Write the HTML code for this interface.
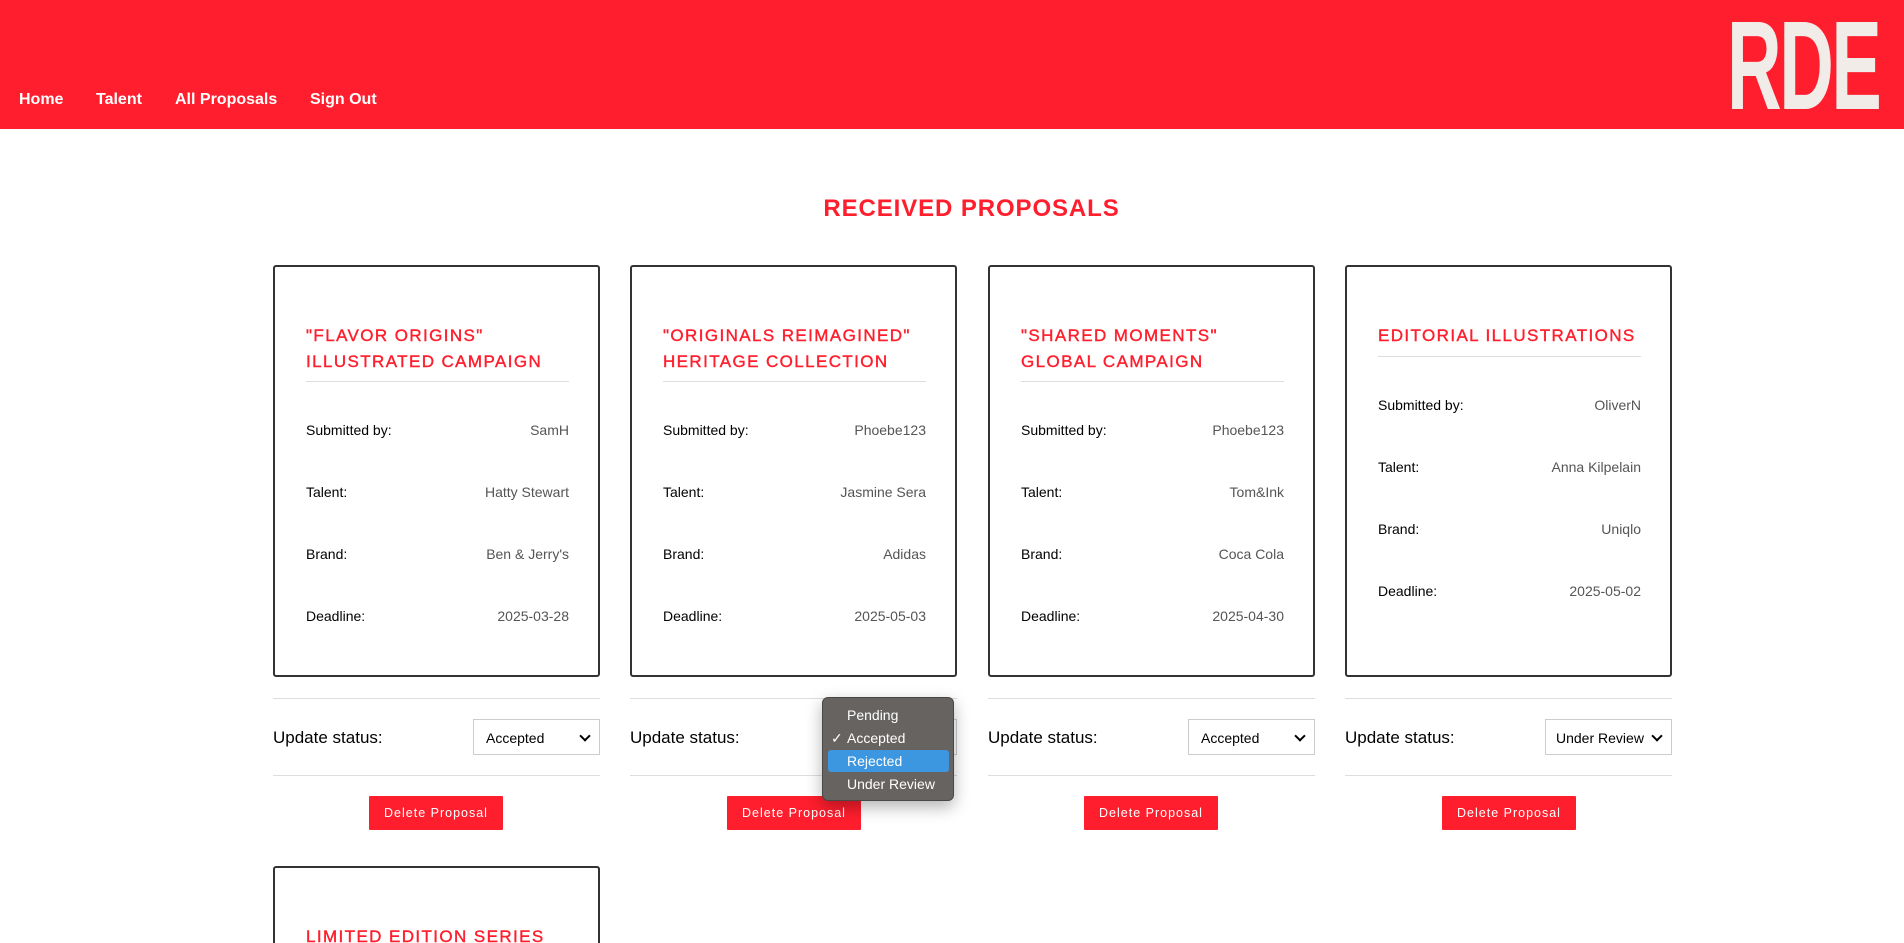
<!DOCTYPE html>
<html><head><meta charset="utf-8"><style>
*{box-sizing:border-box;margin:0;padding:0}
html{width:1904px;height:943px;overflow:hidden}
body{width:1904px;height:943px;overflow:hidden;background:#fff;font-family:"Liberation Sans",sans-serif;position:relative}
.hdr{position:absolute;left:0;top:0;width:1904px;height:129px;background:#ff1e2d}
.nav{position:absolute;top:91px;color:#fff;font-weight:bold;font-size:16px}
.logo{position:absolute;left:1727px;top:18px;width:152px;height:95px;color:#f2ece8;font-weight:bold;font-size:126px;line-height:95px;letter-spacing:-4px;transform:scaleX(0.6);transform-origin:left top;white-space:nowrap}
h1{position:absolute;top:195px;left:0;width:1943px;text-align:center;color:#ff1e2d;font-size:24px;font-weight:bold;letter-spacing:0.9px}
.card{position:absolute;top:265px;width:327px;height:412px;border:2px solid #333;border-radius:3px}
.t{position:absolute;left:31px;top:56px;width:263px;color:#ff1e2d;font-size:17px;line-height:26px;letter-spacing:1.4px;-webkit-text-stroke:0.4px #ff1e2d;white-space:nowrap}
.dv{position:absolute;left:31px;width:263px;height:1px;background:#ddd}
.r{position:absolute;left:31px;width:263px;font-size:14px;display:flex;justify-content:space-between}
.r span:last-child{color:#555}
.hl{position:absolute;height:1px;background:#ddd;width:327px}
.us{position:absolute;top:728px;font-size:17px}
.sel{position:absolute;top:719px;width:127px;height:36px;border:1px solid #ccc;font-size:14px;padding:10px 12px;background:#fff}
.sel:after{content:"";position:absolute;right:10px;top:12px;width:6px;height:6px;border-right:2px solid #000;border-bottom:2px solid #000;transform:rotate(45deg)}
.btn{position:absolute;top:796px;width:134px;height:34px;background:#ff1e2d;color:#fff;font-size:12.5px;letter-spacing:1px;text-align:center;line-height:34px;border-radius:1px}
.menu{position:absolute;left:822px;top:697px;width:132px;height:104px;background:#676361;border-radius:6px;border:1px solid #4a4846;box-shadow:0 6px 16px rgba(0,0,0,.3);color:#fff;font-size:14px}
.mi{position:absolute;left:24px}
</style></head><body>
<div class="hdr">
<div class="nav" style="left:19px">Home</div>
<div class="nav" style="left:96px">Talent</div>
<div class="nav" style="left:175px">All Proposals</div>
<div class="nav" style="left:310px">Sign Out</div>
<div class="logo">RDE</div>
</div>
<h1>RECEIVED PROPOSALS</h1>

<div class="card" style="left:273px"><div class="t">"FLAVOR ORIGINS"<br>ILLUSTRATED CAMPAIGN</div><div class="dv" style="top:114px"></div>
<div class="r" style="top:155px"><span>Submitted by:</span><span>SamH</span></div>
<div class="r" style="top:217px"><span>Talent:</span><span>Hatty Stewart</span></div>
<div class="r" style="top:279px"><span>Brand:</span><span>Ben &amp; Jerry's</span></div>
<div class="r" style="top:341px"><span>Deadline:</span><span>2025-03-28</span></div></div>

<div class="card" style="left:630px"><div class="t">"ORIGINALS REIMAGINED"<br>HERITAGE COLLECTION</div><div class="dv" style="top:114px"></div>
<div class="r" style="top:155px"><span>Submitted by:</span><span>Phoebe123</span></div>
<div class="r" style="top:217px"><span>Talent:</span><span>Jasmine Sera</span></div>
<div class="r" style="top:279px"><span>Brand:</span><span>Adidas</span></div>
<div class="r" style="top:341px"><span>Deadline:</span><span>2025-05-03</span></div></div>

<div class="card" style="left:988px"><div class="t">"SHARED MOMENTS"<br>GLOBAL CAMPAIGN</div><div class="dv" style="top:114px"></div>
<div class="r" style="top:155px"><span>Submitted by:</span><span>Phoebe123</span></div>
<div class="r" style="top:217px"><span>Talent:</span><span>Tom&amp;Ink</span></div>
<div class="r" style="top:279px"><span>Brand:</span><span>Coca Cola</span></div>
<div class="r" style="top:341px"><span>Deadline:</span><span>2025-04-30</span></div></div>

<div class="card" style="left:1345px"><div class="t">EDITORIAL ILLUSTRATIONS</div><div class="dv" style="top:89px"></div>
<div class="r" style="top:130px"><span>Submitted by:</span><span>OliverN</span></div>
<div class="r" style="top:192px"><span>Talent:</span><span>Anna Kilpelain</span></div>
<div class="r" style="top:254px"><span>Brand:</span><span>Uniqlo</span></div>
<div class="r" style="top:316px"><span>Deadline:</span><span>2025-05-02</span></div></div>

<div class="hl" style="left:273px;top:698px"></div><div class="hl" style="left:630px;top:698px"></div><div class="hl" style="left:988px;top:698px"></div><div class="hl" style="left:1345px;top:698px"></div>
<div class="hl" style="left:273px;top:775px"></div><div class="hl" style="left:630px;top:775px"></div><div class="hl" style="left:988px;top:775px"></div><div class="hl" style="left:1345px;top:775px"></div>
<div class="us" style="left:273px">Update status:</div><div class="us" style="left:630px">Update status:</div><div class="us" style="left:988px">Update status:</div><div class="us" style="left:1345px">Update status:</div>
<div class="sel" style="left:473px">Accepted</div><div class="sel" style="left:830px">Accepted</div><div class="sel" style="left:1188px">Accepted</div><div class="sel" style="left:1545px;padding-left:10px">Under Review</div>
<div class="btn" style="left:369px">Delete Proposal</div><div class="btn" style="left:727px">Delete Proposal</div><div class="btn" style="left:1084px">Delete Proposal</div><div class="btn" style="left:1442px">Delete Proposal</div>

<div class="menu">
<div class="mi" style="top:9px">Pending</div>
<div style="position:absolute;left:8px;top:32px">✓</div><div class="mi" style="top:32px">Accepted</div>
<div style="position:absolute;left:5px;top:52px;width:121px;height:22px;background:#3d97e0;border-radius:3px"></div>
<div class="mi" style="top:55px">Rejected</div>
<div class="mi" style="top:78px">Under Review</div>
</div>

<div class="card" style="left:273px;top:866px;height:77px;border-bottom:none;border-radius:3px 3px 0 0"><div class="t">LIMITED EDITION SERIES</div></div>
</body></html>
